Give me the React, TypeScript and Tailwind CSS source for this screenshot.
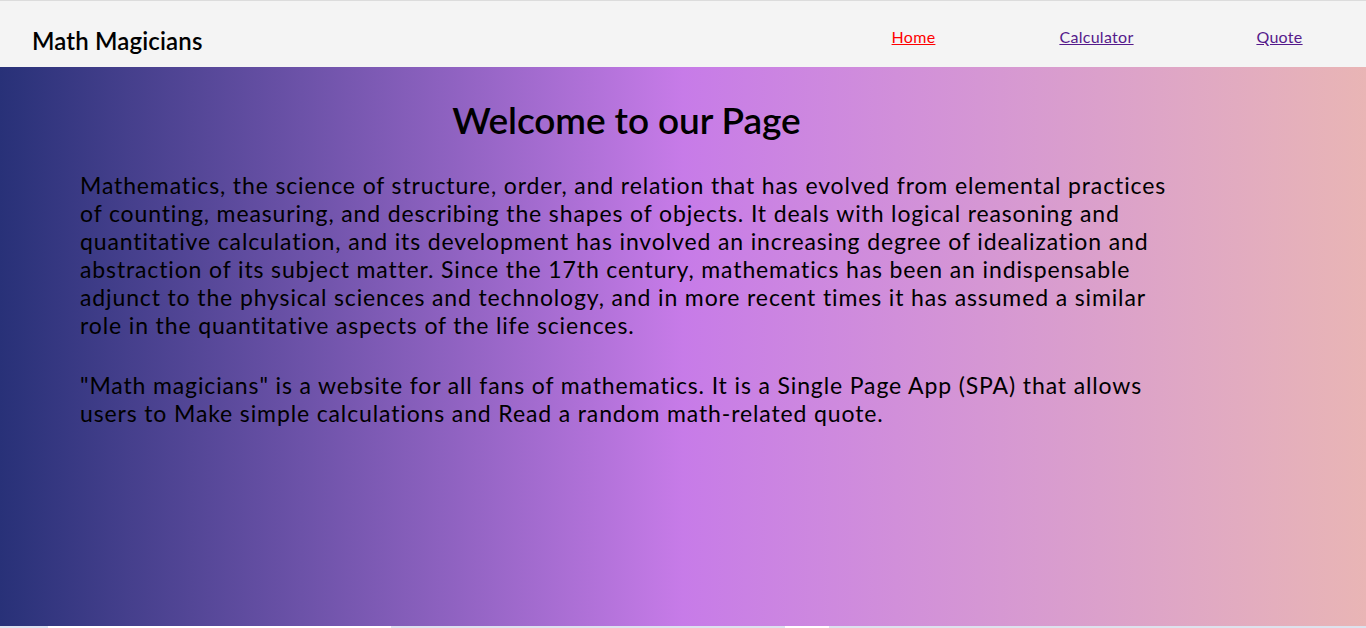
import React from 'react';

const links = [
  { label: 'Home', active: true },
  { label: 'Calculator', active: false },
  { label: 'Quote', active: false },
];

const App: React.FC = () => {
  return (
    <div className="h-[628px] flex flex-col font-['Lato',sans-serif] text-black overflow-hidden">
      {/* Header */}
      <header className="h-[67px] shrink-0 flex items-center justify-between bg-[#f4f4f4] border-t border-[#dcdcdc] pl-[32px]">
        <h1 className="text-[24px] font-semibold mt-[14px] tracking-[0.15px]">Math Magicians</h1>
        <nav className="flex items-center mr-[-5px] mt-[5px]">
          {links.map((link) => (
            <a
              key={link.label}
              href="#"
              className={`w-[183px] text-center text-[16px] underline tracking-[0.3px] ${
                link.active ? 'text-[#ff0000]' : 'text-[#551a8b]'
              }`}
            >
              {link.label}
            </a>
          ))}
        </nav>
      </header>

      {/* Main */}
      <main className="flex-1 bg-gradient-to-r from-[#283178] via-[#c77be8] to-[#e9b5b5]">
        <div className="w-[80%] ml-[80px] pt-[28px]">
          <h2 className="text-center text-[37px] font-semibold leading-[50px] tracking-[-0.1px]">
            Welcome to our Page
          </h2>
          <p className="mt-[26px] text-[23px] leading-[28px] tracking-[0.87px] whitespace-nowrap">
            Mathematics, the science of structure, order, and relation that has evolved from elemental practices
            <br />
            of counting, measuring, and describing the shapes of objects. It deals with logical reasoning and
            <br />
            quantitative calculation, and its development has involved an increasing degree of idealization and
            <br />
            abstraction of its subject matter. Since the 17th century, mathematics has been an indispensable
            <br />
            adjunct to the physical sciences and technology, and in more recent times it has assumed a similar
            <br />
            role in the quantitative aspects of the life sciences.
          </p>
          <p className="mt-[32px] text-[23px] leading-[28px] tracking-[0.87px] whitespace-nowrap">
            "Math magicians" is a website for all fans of mathematics. It is a Single Page App (SPA) that allows
            <br />
            users to Make simple calculations and Read a random math-related quote.
          </p>
        </div>
      </main>

      {/* bottom edge strip */}
      <div className="h-[2px] shrink-0 flex bg-[#dde3ee]">
        <div className="w-[48px]" />
        <div className="w-[343px] bg-white" />
        <div className="w-[394px]" />
        <div className="w-[44px] bg-white" />
      </div>
    </div>
  );
};

export default App;
